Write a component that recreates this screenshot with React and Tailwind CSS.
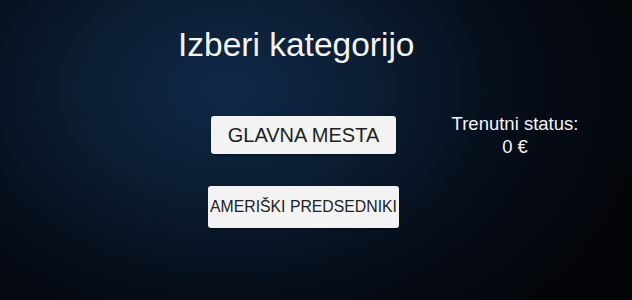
import React from "react";

export default function App() {
  return (
    <div
      className="w-[632px] h-[300px] overflow-hidden text-white bg-[radial-gradient(ellipse_420px_300px_at_36%_30%,#0f2946_0%,#0b1d33_35%,#060e1a_65%,#030509_100%)]"
      style={{ fontFamily: "'Liberation Sans', Arial, sans-serif" }}
    >
      <div className="pt-[28px] pl-[178px] text-[33.5px] leading-[33px] text-[#f4f4f4]">
        Izberi kategorijo
      </div>
      <div className="mt-[55px] flex items-start">
        <div className="ml-[208px] w-[191px] flex flex-col items-center gap-[32px]">
          <button className="w-[185px] h-[38px] rounded-[3px] bg-[#f3f3f3] text-[#222222] text-[20px] leading-none shadow-[0_1px_2px_rgba(0,0,0,0.5)] flex items-center justify-center">
            GLAVNA MESTA
          </button>
          <button className="w-[191px] h-[42px] rounded-[3px] bg-[#f3f3f3] text-[#222222] text-[15.8px] leading-none shadow-[0_1px_2px_rgba(0,0,0,0.5)] flex items-center justify-center whitespace-nowrap">
            AMERIŠKI PREDSEDNIKI
          </button>
        </div>
        <div className="ml-[46px] -mt-[4px] w-[140px] text-center text-[18.5px] leading-[23px] text-[#f4f4f4]">
          <div>Trenutni status:</div>
          <div>0 €</div>
        </div>
      </div>
    </div>
  );
}
